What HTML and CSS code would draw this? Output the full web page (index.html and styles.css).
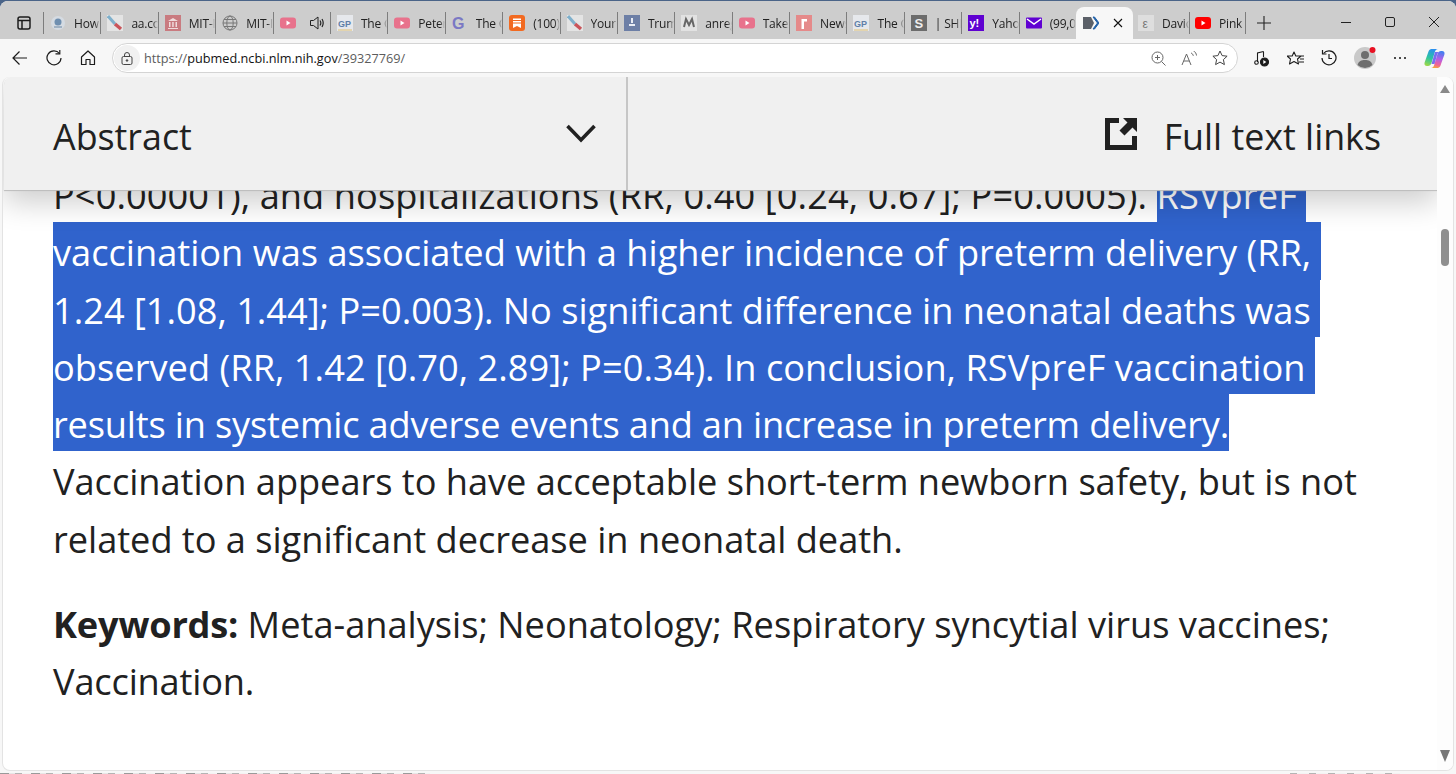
FILE: index.html
```html
<!DOCTYPE html>
<html lang="en">
<head>
<meta charset="utf-8">
<title>PubMed</title>
<link rel="stylesheet" href="styles.css">
</head>
<body>
<div class="window">
  <header class="tabstrip">
    <div class="side-btn"><svg width="16" height="16" viewBox="0 0 16 16" fill="none" stroke="#1c1c1c" stroke-width="1.5"><rect x="2" y="2" width="12" height="12" rx="2"/><path d="M2 5.500h12M6 5.500V14"/></svg></div>
    <div class="tab"><svg class="fav" viewBox="0 0 16 16"><circle cx="8" cy="8" r="7" fill="#d5dbe2"/><circle cx="8" cy="7" r="3.500" fill="#6f8fb0"/><path d="M4 12h8" stroke="#8da3b8" stroke-width="1.500"/></svg><span class="tt">How</span></div>
    <div class="tab"><svg class="fav" viewBox="0 0 16 16"><rect width="16" height="16" fill="#e4e4e4"/><path d="M1 1l7 8" stroke="#7fb0cc" stroke-width="3"/><path d="M8 9l6 5" stroke="#c9545a" stroke-width="3.500"/></svg><span class="tt">aa.com</span></div>
    <div class="tab"><svg class="fav" viewBox="0 0 16 16"><rect width="16" height="16" fill="#c97b80"/><path d="M3 6l5-3 5 3zM4 7h1.500v5H4zM7.200 7h1.500v5H7.200zM10.500 7H12v5h-1.500zM3 13h10v1H3z" fill="#f0dcdc"/></svg><span class="tt">MIT-IBM</span></div>
    <div class="tab"><svg class="fav" viewBox="0 0 16 16" fill="none" stroke="#777" stroke-width="1"><circle cx="8" cy="8" r="7"/><ellipse cx="8" cy="8" rx="3.200" ry="7"/><path d="M1 8h14M2 4.500h12M2 11.500h12"/></svg><span class="tt">MIT-IBM</span></div>
    <div class="tab tab-audio"><svg class="fav" viewBox="0 0 16 16"><rect y="2.500" width="16" height="11" rx="3" fill="#e8728c"/><path d="M6.500 5.500l4 2.500-4 2.500z" fill="#fff"/></svg><svg class="speaker" viewBox="0 0 16 16" fill="none" stroke="#222" stroke-width="1"><path d="M1.500 5.500h3L9 2v12l-4.500-3.500h-3z"/><path d="M11 5.500c1 1.500 1 3.500 0 5M13 4c1.500 2.500 1.500 5.500 0 8" stroke-width="1.200"/></svg></div>
    <div class="tab"><svg class="fav" viewBox="0 0 16 16"><rect width="16" height="16" fill="#e6e8ec"/><text x="1" y="12" class="fav-gp">GP</text><path d="M1 15h14" stroke="#e0c070"/></svg><span class="tt">The Gateway</span></div>
    <div class="tab"><svg class="fav" viewBox="0 0 16 16"><rect y="2.500" width="16" height="11" rx="3" fill="#e8728c"/><path d="M6.500 5.500l4 2.500-4 2.500z" fill="#fff"/></svg><span class="tt">Peter</span></div>
    <div class="tab"><svg class="fav" viewBox="0 0 16 16"><text x="0" y="14" class="fav-g">G</text></svg><span class="tt">The Grand</span></div>
    <div class="tab"><svg class="fav" viewBox="0 0 16 16"><rect width="16" height="16" rx="3" fill="#f26a21"/><path d="M4 3.500h8v1.500H4zM4 6h8v1.500H4zM4 8.500h8V13l-4-2-4 2z" fill="#fff"/></svg><span class="tt">(100) Sub</span></div>
    <div class="tab"><svg class="fav" viewBox="0 0 16 16"><rect width="16" height="16" fill="#e4e4e4"/><path d="M1 1l7 8" stroke="#7fb0cc" stroke-width="3"/><path d="M8 9l6 5" stroke="#c9545a" stroke-width="3.500"/></svg><span class="tt">Your</span></div>
    <div class="tab"><svg class="fav" viewBox="0 0 16 16"><rect width="16" height="16" fill="#6d7fa6"/><path d="M7 3h2v5H7zM5 9h6v2H5z" fill="#e8ecf4"/></svg><span class="tt">Trump</span></div>
    <div class="tab"><svg class="fav" viewBox="0 0 16 16"><rect width="16" height="16" fill="#e2e2e2"/><path d="M3 12l2-8 3 6 3-6 2 8" fill="none" stroke="#666" stroke-width="2"/></svg><span class="tt">anreg</span></div>
    <div class="tab"><svg class="fav" viewBox="0 0 16 16"><rect y="2.500" width="16" height="11" rx="3" fill="#e8728c"/><path d="M6.500 5.500l4 2.500-4 2.500z" fill="#fff"/></svg><span class="tt">Take</span></div>
    <div class="tab"><svg class="fav" viewBox="0 0 16 16"><rect width="16" height="16" fill="#e58a8a"/><path d="M5.500 14V4h5.500v2.500H8V14z" fill="#fff"/></svg><span class="tt">News</span></div>
    <div class="tab"><svg class="fav" viewBox="0 0 16 16"><rect width="16" height="16" fill="#e6e8ec"/><text x="1" y="12" class="fav-gp">GP</text><path d="M1 15h14" stroke="#e0c070"/></svg><span class="tt">The Gateway</span></div>
    <div class="tab"><svg class="fav" viewBox="0 0 16 16"><rect width="16" height="16" fill="#6c6c6c"/><text x="3.500" y="13" class="fav-s">S</text></svg><span class="tt">| SHE</span></div>
    <div class="tab"><svg class="fav" viewBox="0 0 16 16"><rect width="16" height="16" fill="#5f01d1"/><text x="1.500" y="12" class="fav-y">y!</text></svg><span class="tt">Yahoo</span></div>
    <div class="tab"><svg class="fav" viewBox="0 0 16 16"><rect y="2.500" width="16" height="11" rx="1" fill="#6001d2"/><path d="M1 4l7 5 7-5" fill="none" stroke="#fff" stroke-width="1.500"/></svg><span class="tt">(99,0</span></div>
    <div class="tab tab-active"><svg class="fav" viewBox="0 0 16 16"><path d="M0 2h8l3 6-3 6H0z" fill="#5b6068"/><path d="M10 2l4.500 6-4.500 6h1.500L16 8l-4.500-6z" fill="#2060a8" stroke="#2060a8"/></svg><svg class="close" viewBox="0 0 10 10" fill="none" stroke="#111" stroke-width="1.100"><path d="M1 1l8 8M9 1l-8 8"/></svg></div>
    <div class="tab tab-after"><svg class="fav" viewBox="0 0 16 16"><rect width="16" height="16" fill="#dedede"/><text x="4.500" y="12.500" class="fav-e">ε</text></svg><span class="tt">David</span></div>
    <div class="tab tab-last"><svg class="fav" viewBox="0 0 16 16"><rect y="2" width="16" height="12" rx="3" fill="#f00"/><path d="M6.500 5.500l4 2.500-4 2.500z" fill="#fff"/></svg><span class="tt">Pink</span></div>
    <div class="new-tab"><svg width="14" height="14" viewBox="0 0 14 14" stroke="#222" stroke-width="1.100"><path d="M7 0v14M0 7h14"/></svg></div>
    <div class="win-controls">
      <svg width="10" height="10" viewBox="0 0 10 10" stroke="#222"><path d="M0 5.500h10"/></svg>
      <svg width="10" height="10" viewBox="0 0 10 10" fill="none" stroke="#222"><rect x=".5" y=".5" width="9" height="9" rx="1.500"/></svg>
      <svg width="10" height="10" viewBox="0 0 10 10" fill="none" stroke="#222"><path d="M0 0l10 10M10 0L0 10"/></svg>
    </div>
  </header>

  <nav class="toolbar">
    <svg class="tb-icon" viewBox="0 0 16 16" fill="none" stroke="#1c1c1c" stroke-width="1.200"><path d="M15 8H1M7.500 1.500L1 8l6.500 6.500"/></svg>
    <svg class="tb-icon" viewBox="0 0 16 16" fill="none" stroke="#1c1c1c" stroke-width="1.200"><path d="M13.500 3.500A7 7 0 1 0 15 8"/><path d="M9.500 3.800h4.300V0"/></svg>
    <svg class="tb-icon" viewBox="0 0 16 16" fill="none" stroke="#1c1c1c" stroke-width="1.200"><path d="M8 1L1.500 7v7.500h4.500V9.500h4v5h4.500V7z" stroke-linejoin="round"/></svg>
    <div class="urlbar">
      <span class="lock-wrap"><svg width="12" height="13" viewBox="0 0 12 13" fill="none" stroke="#444" stroke-width="1"><rect x="1" y="4.500" width="10" height="8" rx="1.500"/><path d="M3.500 4.500V3a2.500 2.500 0 0 1 5 0v1.500"/><circle cx="6" cy="8.500" r=".8" fill="#444"/></svg></span>
      <span class="url"><span class="dim">https://</span>pubmed.ncbi.nlm.nih.gov<span class="dim">/39327769/</span></span>
      <span class="url-icons">
        <svg width="15" height="15" viewBox="0 0 15 15" fill="none" stroke="#666" stroke-width="1"><circle cx="6.500" cy="6.500" r="5.500"/><path d="M10.500 10.500l4 4M4 6.500h5M6.500 4v5"/></svg>
        <svg class="read" width="16" height="15" viewBox="0 0 16 15" fill="none" stroke="#666" stroke-width="1"><path d="M1 14L5.500 3 10 14M2.800 10h5.500M10 2c1.500.5 2 1.500 2.300 2.800M12.500 0c1.800.8 2.800 2.500 3 4.500"/></svg>
        <svg width="16" height="16" viewBox="0 0 16 16" fill="none" stroke="#444" stroke-width="1"><path d="M8 1l2.100 4.600 5 .6-3.700 3.400 1 5L8 12.100 3.600 14.600l1-5L.9 6.200l5-.6z" stroke-linejoin="round"/></svg>
      </span>
    </div>
    <div class="tb-right">
      <svg width="16" height="17" viewBox="0 0 16 17" fill="none" stroke="#1c1c1c" stroke-width="1.100"><path d="M3.500 12V3l6-1.500"/><circle cx="2.500" cy="12.500" r="1.800"/><circle cx="10.500" cy="12" r="4" fill="#1c1c1c"/><path d="M9.300 10l3 2-3 2z" fill="#fff" stroke="none"/><path d="M9.500 1.500V7"/></svg>
      <svg width="17" height="15" viewBox="0 0 17 15" fill="none" stroke="#1c1c1c" stroke-width="1.100"><path d="M7 1l1.800 4H14l-3.500 3 1 5L7 10.500 2.500 13l1-5L0 5h5.200zM12 11h5M13 8h4M11 5h6" stroke-linejoin="round"/></svg>
      <svg width="16" height="16" viewBox="0 0 16 16" fill="none" stroke="#1c1c1c" stroke-width="1.200"><path d="M2.500 3.500A7 7 0 1 1 1 8"/><path d="M1.500 0v4h4M8 4v4.500h3"/></svg>
      <svg class="avatar" width="22" height="22" viewBox="0 0 22 22"><circle cx="11" cy="11" r="11" fill="#c9c9c9"/><circle cx="11" cy="8" r="4" fill="#6e6e6e"/><path d="M3.500 18c1-4 4-5 7.500-5s6.500 1 7.500 5a11 11 0 0 1-15 0z" fill="#6e6e6e"/><circle cx="18.500" cy="3" r="3" fill="#e81123"/></svg>
      <svg width="14" height="4" viewBox="0 0 14 4" fill="#222"><circle cx="2" cy="2" r="1.100"/><circle cx="7" cy="2" r="1.100"/><circle cx="12" cy="2" r="1.100"/></svg>
      <svg width="21" height="21" viewBox="0 0 21 21"><defs><linearGradient id="cp1" x1="0.600" y1="0" x2="0.300" y2="1"><stop offset="0" stop-color="#2b8ff0"/><stop offset=".55" stop-color="#2cc5a0"/><stop offset="1" stop-color="#9ad84a"/></linearGradient><linearGradient id="cp2" x1="0.600" y1="0" x2="0.400" y2="1"><stop offset="0" stop-color="#3f7ff0"/><stop offset=".45" stop-color="#b060e8"/><stop offset=".8" stop-color="#f0609a"/><stop offset="1" stop-color="#f6a040"/></linearGradient></defs><path d="M7.500 1H14c-1.500 0-2.500 1-3 2.500L7.500 15c-.6 2-2 3-3.500 3H3C1 18 0 16.500.6 14.500L4.500 3.500C5 2 6 1 7.500 1z" fill="url(#cp1)"/><path d="M13.500 20H7c1.500 0 2.500-1 3-2.500L13.500 6c.6-2 2-3 3.500-3h1c2 0 3 1.500 2.400 3.500l-3.900 11C16 19 15 20 13.500 20z" fill="url(#cp2)"/><path d="M11 4h4c-1 .5-1.500 1.500-2 3l-2.500 9H7.500z" fill="#7a6cf0"/></svg>
    </div>
  </nav>

  <main class="viewport">
    <div class="sticky">
      <div class="sticky-left"><span class="sticky-text">Abstract</span><svg width="30" height="19" viewBox="0 0 30 19" fill="none" stroke="#212121" stroke-width="3.600"><path d="M1.500 2l13.500 14L28.500 2"/></svg></div>
      <div class="sticky-right"><svg width="32" height="32" viewBox="0 0 32 32" fill="#212121"><path d="M0 0h14v5H5v22h22v-9h5v14H0z"/><path d="M18 0h14v14l-4.500-4.500-8 8-5-5 8-8z"/></svg><span class="sticky-text">Full text links</span></div>
    </div>
    <div class="scrollbar">
      <svg width="10" height="8" viewBox="0 0 10 8" fill="#8a8a8a"><path d="M5 0l5 8H0z"/></svg>
      <div class="thumb"></div>
      <svg class="arrow-down" width="10" height="12" viewBox="0 0 10 12" fill="#777"><path d="M0 0h10L5 12z"/></svg>
    </div>
    <article class="article">
      <p class="abstract">
        <span class="line line-wide">P&lt;0.00001), and hospitalizations (RR, 0.40 [0.24, 0.67]; P=0.0005). <span class="sel">RSVpreF </span></span>
        <span class="line"><span class="sel">vaccination was associated with a higher incidence of preterm delivery (RR, </span></span>
        <span class="line"><span class="sel">1.24 [1.08, 1.44]; P=0.003). No significant difference in neonatal deaths was </span></span>
        <span class="line line-slight"><span class="sel">observed (RR, 1.42 [0.70, 2.89]; P=0.34). In conclusion, RSVpreF vaccination </span></span>
        <span class="line line-tight"><span class="sel">results in systemic adverse events and an increase in preterm delivery.</span></span>
        <span class="line line-snug">Vaccination appears to have acceptable short-term newborn safety, but is not</span>
        <span class="line line-snug">related to a significant decrease in neonatal death.</span>
      </p>
      <p class="keywords">
        <span class="line"><strong class="kw">Keywords:</strong> Meta-analysis; Neonatology; Respiratory syncytial virus vaccines;</span>
        <span class="line line-tight">Vaccination.</span>
      </p>
    </article>
  </main>
  <div class="bottom-strip"></div>
</div>
</body>
</html>
```
FILE: styles.css
```css
* { box-sizing: border-box; }
html, body { margin: 0; height: 100%; overflow: hidden; background: #4a6488; }
body { font-family: "Open Sans", "Noto Sans", "Liberation Sans", sans-serif; color: #212121; }
.window { height: 773px; background: #f7f7f7; border-radius: 8px 8px 0 0; margin-top: 1px; display: flex; flex-direction: column; overflow: hidden; }

.tabstrip { height: 38px; flex: none; display: flex; align-items: center; padding-left: 4px; background: #cdcdcd; }
.side-btn { width: 39px; height: 38px; display: flex; align-items: center; justify-content: center; padding-left: 1px; padding-top: 6px; flex: none; }
.tab { width: 57.4px; height: 22px; margin-top: 6px; flex: none; display: flex; align-items: center; gap: 8px; padding-left: 6px; border-left: 1px solid #7d7d7d; overflow: hidden; }
.fav { width: 16px; height: 16px; flex: none; }
.tt { font-family: "Open Sans", sans-serif; font-size: 12px; letter-spacing: -.2px; color: #222; white-space: nowrap; -webkit-mask-image: linear-gradient(to right, #000 80%, transparent 100%); mask-image: linear-gradient(to right, #000 80%, transparent 100%); overflow: hidden; flex: 1; min-width: 0; }
.speaker { width: 16px; height: 16px; flex: none; margin-left: 5px; }
.tab-active { height: 32px; margin-top: 6px; align-self: flex-start; background: #f7f7f7; border-left: 0; border-radius: 8px 8px 0 0; width: 57px; padding-left: 7px; gap: 14px; }
.close { width: 10px; height: 10px; flex: none; }
.tab-after { border-left: 0; width: 56px; padding-left: 5px; }
.tab-last { width: 56px; padding-left: 5px; }
.new-tab { width: 36px; height: 22px; margin-top: 6px; border-left: 1px solid #7d7d7d; display: flex; align-items: center; justify-content: center; flex: none; }
.win-controls { margin-left: auto; display: flex; gap: 34px; align-items: center; margin-top: 3px; padding-right: 17px; }
.fav-gp { font: bold 9px "Liberation Sans", sans-serif; fill: #5f7fa8; }
.fav-g { font: bold 16px "Liberation Sans", sans-serif; fill: #7a78c4; }
.fav-s { font: bold 13px "Liberation Sans", sans-serif; fill: #eee; }
.fav-y { font: bold 11px "Liberation Sans", sans-serif; fill: #fff; }
.fav-e { font: 12px "Liberation Sans", sans-serif; fill: #777; }

.toolbar { height: 38px; flex: none; background: #f7f7f7; display: flex; align-items: center; padding-left: 12px; }
.tb-icon { width: 16px; height: 16px; flex: none; margin-right: 18px; }
.urlbar { width: 1126px; height: 30px; margin-left: -2px; background: #fff; border: 1px solid #d4d4d4; border-radius: 15px; display: flex; align-items: center; flex: none; }
.lock-wrap { width: 26px; height: 26px; margin-left: 1px; background: #f1f1f1; border-radius: 50%; display: flex; align-items: center; justify-content: center; flex: none; }
.url { margin-left: 4px; font-family: "Open Sans", sans-serif; font-size: 12.7px; color: #111; white-space: nowrap; }
.dim { color: #5c5c5c; }
.url-icons { margin-left: auto; display: flex; align-items: center; gap: 15px; padding-right: 9px; }
.tb-right { display: flex; align-items: center; gap: 17px; flex: 1; padding-left: 16px; }

.viewport { flex: 1; position: relative; background: #fff; overflow: hidden; margin: 0 2px 1px 2px; border-radius: 8px; border: 1px solid #e3e3e3; border-top: 0; }
.sticky { position: absolute; left: 1px; top: 0; width: 1434px; height: 113px; background: #f0f0f0; display: flex; z-index: 2; border-radius: 8px 0 0 0; box-shadow: 0 1px 1px #bcbcbc, 0 12px 30px rgba(0,0,0,.2); color: #212121; }
.sticky-text { font-size: 35.8px; padding-top: 4px; }
.sticky-left { width: 624px; padding: 0 30px 0 49px; display: flex; align-items: center; justify-content: space-between; border-right: 2px solid #c6c6c6; }
.sticky-right { flex: 1; display: flex; align-items: center; justify-content: flex-end; gap: 27px; padding-right: 57px; }
.scrollbar { position: absolute; right: 0; top: 0; bottom: 0; width: 16px; background: #fdfdfd; z-index: 3; display: flex; flex-direction: column; align-items: center; padding-top: 8px; }
.thumb { width: 8px; height: 37px; background: #8f8f8f; border-radius: 4px; margin-top: 136px; }
.arrow-down { margin-top: auto; margin-bottom: 8px; }

.article { padding: 88px 0 0 50px; font-size: 36.2px; }
.abstract, .keywords { margin: 0; }
.keywords { margin-top: 28px; }
.line { display: block; height: 57.3px; line-height: 60px; white-space: pre; }
.line-wide { letter-spacing: .09px; }
.line-slight { letter-spacing: .04px; }
.line-snug { letter-spacing: -.03px; }
.line-tight { letter-spacing: -.18px; }
.kw { letter-spacing: -.2px; }
.sel { display: inline-block; height: 57.3px; line-height: 60px; background: #3063cc; color: #fff; white-space: pre; vertical-align: top; }
.bottom-strip { height: 2px; flex: none; background-image: repeating-linear-gradient(to right, #9a9a9a 0 9px, #e6e6e6 9px 15px, #b4b4b4 15px 22px, #f3f3f3 22px 31px), repeating-linear-gradient(to right, #b4b4b4 0 7px, #f3f3f3 7px 19px); background-size: 430px 1px, 110px 1px; background-position: left bottom, 1290px bottom; background-repeat: no-repeat; }
```
